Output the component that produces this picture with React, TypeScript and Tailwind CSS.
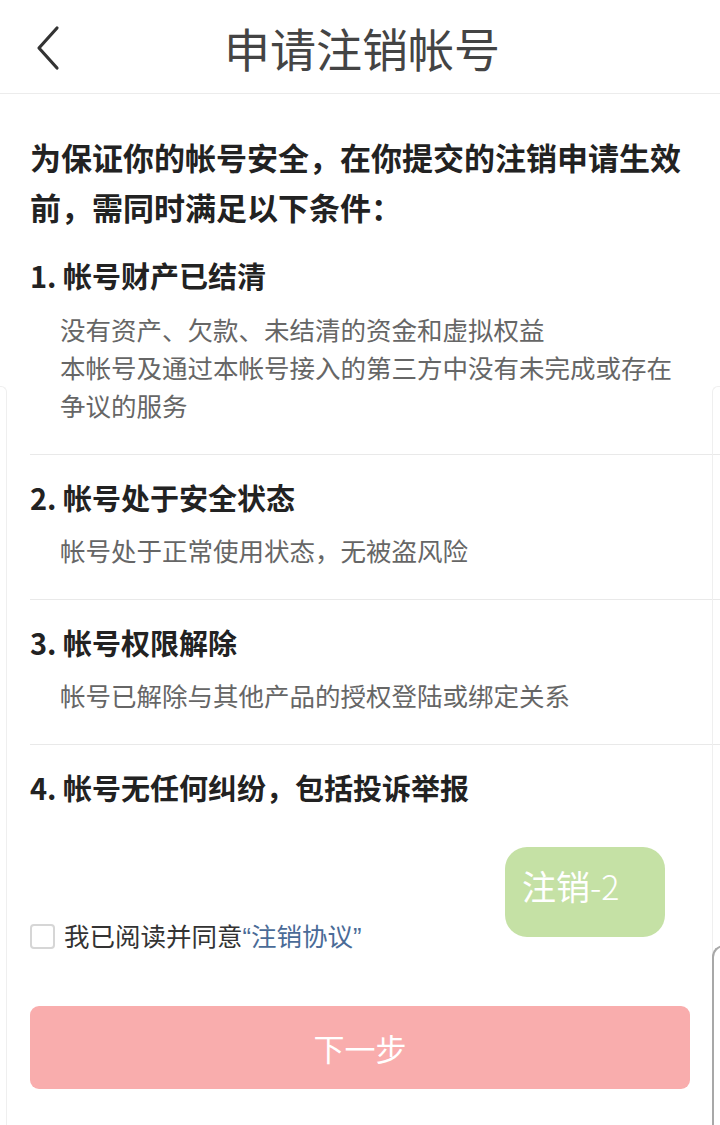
import React from "react";

function Section({
  title,
  lines,
  last,
  first,
}: {
  title: string;
  lines?: string[];
  last?: boolean;
  first?: boolean;
}) {
  return (
    <div
      className={`${first ? "pt-[23px]" : "pt-[22px]"} ${
        last ? "" : "border-b border-[#e9e9e9] pb-[30px]"
      }`}
    >
      <div className="pr-[30px] text-[29px] font-bold leading-[40px] text-[#222]">{title}</div>
      {lines && (
        <div className={`${first ? "mt-[15px]" : "mt-[14px]"} pl-[30px] pr-[30px] text-[25.5px] leading-[38px] text-[#666]`}>
          {lines.map((l, i) => (
            <div key={i}>{l}</div>
          ))}
        </div>
      )}
    </div>
  );
}

export default function App() {
  return (
    <div className="relative h-[1125px] w-[720px] overflow-hidden bg-white font-['Noto_Sans_CJK_SC','Noto_Sans',sans-serif]">
      {/* Header */}
      <div className="grid h-[94px] grid-cols-[1fr_auto_1fr] items-center border-b border-[#ececec]">
        <div className="pl-[34px] pt-[2px]">
          <svg width="28" height="46" viewBox="0 0 28 46" fill="none">
            <path d="M23 3 L5 23 L23 43" stroke="#333" strokeWidth="3.2" strokeLinecap="round" strokeLinejoin="round" />
          </svg>
        </div>
        <div className="pl-[4px] text-[46px] font-normal leading-[56px] text-[#444]">申请注销帐号</div>
        <div />
      </div>

      {/* Content */}
      <div className="pl-[30px]">
        <div className="pr-[30px] pt-[38px] text-[31px] font-bold leading-[50px] text-[#222]">
          为保证你的帐号安全，在你提交的注销申请生效前，需同时满足以下条件：
        </div>

        <Section
          first
          title="1. 帐号财产已结清"
          lines={["没有资产、欠款、未结清的资金和虚拟权益", "本帐号及通过本帐号接入的第三方中没有未完成或存在争议的服务"]}
        />
        <Section title="2. 帐号处于安全状态" lines={["帐号处于正常使用状态，无被盗风险"]} />
        <Section title="3. 帐号权限解除" lines={["帐号已解除与其他产品的授权登陆或绑定关系"]} />
        <Section last title="4. 帐号无任何纠纷，包括投诉举报" />

        {/* Agreement */}
        <div className="mt-[109px] flex h-[40px] items-center">
          <div className="h-[25px] w-[25px] rounded-[4px] border-2 border-[#d6d6d6] bg-white" />
          <div className="ml-[9px] text-[25.5px] leading-[40px] text-[#333]">
            我已阅读并同意
            <span className="text-[#4a6b97]">
              <span className="font-['Liberation_Sans',sans-serif]">“</span>注销协议
              <span className="font-['Liberation_Sans',sans-serif]">”</span>
            </span>
          </div>
        </div>

        {/* Button */}
        <div className="mt-[50px] flex h-[83px] w-[660px] items-center justify-center rounded-[9px] bg-[#f9adad] text-[31px] leading-[40px] text-white">
          下一步
        </div>
      </div>

      {/* Floating badge */}
      <div className="absolute left-[505px] top-[847px] h-[90px] w-[160px] rounded-[22px] bg-[#c5e1a5] pl-[17px] pt-[17px] text-[34px] leading-[44px] text-white">
        注销<span className="font-light">-2</span>
      </div>

      {/* faint adjacent card edges */}
      <div className="pointer-events-none absolute left-[-20px] top-[386px] h-[800px] w-[27px] rounded-tr-[6px] border-r border-t border-[#efefef]" />
      <div className="pointer-events-none absolute left-[712px] top-[386px] h-[800px] w-[30px] rounded-tl-[6px] border-l border-t border-[#efefef]" />
      <div className="pointer-events-none absolute left-[712px] top-[945px] h-[300px] w-[30px] rounded-tl-[12px] border-l-2 border-t-2 border-[#a8a8a8]" />
    </div>
  );
}
